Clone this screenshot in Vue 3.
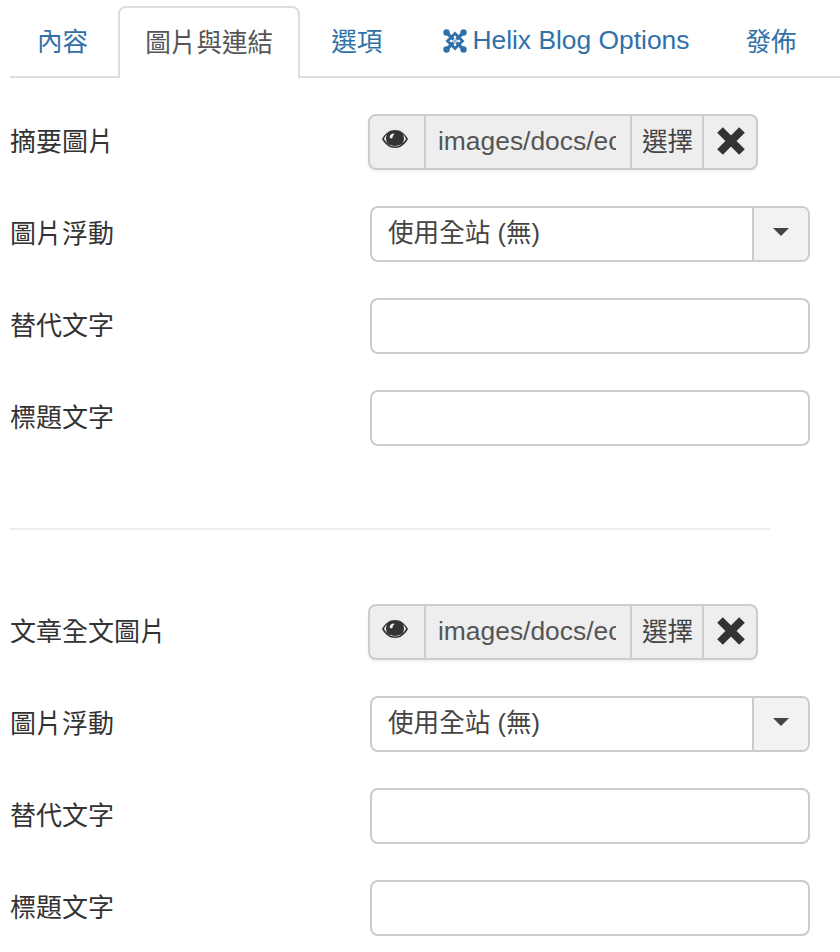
<script setup>
const tabs = [
  { id: 'content', label: '內容' },
  { id: 'images', label: '圖片與連結', active: true },
  { id: 'options', label: '選項' },
  { id: 'helix', label: 'Helix Blog Options', joomla: true },
  { id: 'publish', label: '發佈' },
];

const groups = [
  { image: '摘要圖片' },
  { image: '文章全文圖片' },
];
</script>

<template>
  <div class="page">
    <ul class="tabs">
      <li v-for="tab in tabs" :key="tab.id" class="tab" :class="{ active: tab.active, helix: tab.joomla }">
        <svg v-if="tab.joomla" class="joomla" viewBox="0 0 24 24" width="24" height="24">
          <g fill="#3071a9">
            <circle cx="3.500" cy="3.500" r="3.200" />
            <circle cx="20.500" cy="3.500" r="3.200" />
            <circle cx="3.500" cy="20.500" r="3.200" />
            <circle cx="20.500" cy="20.500" r="3.200" />
          </g>
          <g fill="none" stroke="#3071a9">
            <path stroke-width="3.200" d="M3.500 3.500 L20.500 20.500 M20.500 3.500 L3.500 20.500" />
            <path stroke-width="2.800" d="M12 4.500 L19.500 12 L12 19.500 L4.500 12 Z" />
          </g>
          <path fill="#fff" opacity="0.7" d="M12 8.600 L13.600 10.200 L12 11.800 L10.400 10.200 Z M12 12.200 L13.600 13.800 L12 15.400 L10.400 13.800 Z M8.600 12 L10.200 10.400 L11.800 12 L10.200 13.600 Z M15.400 12 L13.800 10.400 L12.200 12 L13.800 13.600 Z" />
        </svg>
        <span>{{ tab.label }}</span>
      </li>
    </ul>

    <section v-for="(group, i) in groups" :key="i" class="group">
      <div class="row">
        <label>{{ group.image }}</label>
        <div class="media">
          <span class="seg eye">
            <svg viewBox="0 0 26 18" width="26" height="18">
              <path fill="#333" fill-rule="evenodd" d="M13 0C7.500 0 3 3.400 0 9c3 5.600 7.500 9 13 9s10-3.400 13-9c-3-5.600-7.500-9-13-9zM5.200 4.200C3.800 5.200 2.800 6.900 2 9c1.900 3.300 5.900 7 11 7s9.100-3.700 11-7c-.8-2.100-1.800-3.800-3.200-4.800 .7 1.200 1.200 2.800 1.200 4.300 0 4.700-4 8-9 8s-9-3.300-9-8c0-1.500.5-3.100 1.200-4.300zM11 3.500c-1.900.4-3.300 1.800-3.300 3.500 0 .8.700 1.400 1.500 1.400S10.700 7.800 10.700 7c0-1 .5-1.700 1.300-2.200.5-.3.400-1.400-1-1.300z" />
            </svg>
          </span>
          <span class="seg path"><span class="path-text">images/docs/ec</span></span>
          <span class="seg pick">選擇</span>
          <span class="seg clear">
            <svg viewBox="0 0 28 28" width="28" height="28">
              <path d="M3 3 L25 25 M25 3 L3 25" stroke="#333" stroke-width="8" fill="none" />
            </svg>
          </span>
        </div>
      </div>
      <div class="row">
        <label>圖片浮動</label>
        <div class="select">
          <span class="select-value">使用全站 (無)</span>
          <span class="select-arrow"><i></i></span>
        </div>
      </div>
      <div class="row">
        <label>替代文字</label>
        <input class="text" type="text" />
      </div>
      <div class="row">
        <label>標題文字</label>
        <input class="text" type="text" />
      </div>
      <hr v-if="i === 0" />
    </section>
  </div>
</template>

<style>
body { background: #fff; overflow: hidden; }
</style>

<style scoped>
.page {
  height: 952px;
  overflow: hidden;
  padding-top: 6px;
  box-sizing: border-box;
  font-family: "Liberation Sans", "Noto Sans CJK TC", sans-serif;
  font-size: 26px;
  color: #333;
}
.tabs {
  display: flex;
  list-style: none;
  margin: 0 0 0 10px;
  padding: 0;
  height: 70px;
  border-bottom: 2px solid #ddd;
  font-size: 25.6px;
}
.tab {
  display: flex;
  align-items: center;
  height: 66px;
  margin-right: 4px;
  padding: 0 27px;
  box-sizing: border-box;
  color: #3071a9;
  white-space: nowrap;
}
.tab.active {
  height: 72px;
  padding: 0 25px 6px;
  margin-left: -1px;
  background: #fff;
  border: 2px solid #ddd;
  border-bottom: 0;
  border-radius: 8px 8px 0 0;
  color: #555;
}
.helix { font-size: 26.4px; padding-right: 25px; }
.helix span { padding-top: 3px; }
.joomla { margin: 4px 5px 0 3px; }
.group { margin-left: 10px; }
.row {
  display: flex;
  align-items: center;
  height: 56px;
  margin-bottom: 36px;
}
.tabs + .group { padding-top: 36px; }
.row label { width: 360px; flex-shrink: 0; padding-bottom: 6px; }
.media {
  display: flex;
  margin-left: -2px;
  width: 390px;
  height: 56px;
  box-sizing: border-box;
  background: #eee;
  border: 2px solid #ccc;
  border-radius: 8px;
  box-shadow: 0 2px 3px rgba(0, 0, 0, 0.06);
  overflow: hidden;
  font-size: 26.4px;
}
.seg {
  display: flex;
  align-items: center;
  justify-content: center;
  box-sizing: border-box;
  flex-shrink: 0;
  border-right: 2px solid #ccc;
  padding-bottom: 2px;
}
.eye { width: 56px; padding: 0 4px 6px 0; }
.path { width: 206px; padding: 0 0 2px 12px; justify-content: flex-start; color: #555; }
.path-text { display: block; width: 178px; overflow: hidden; white-space: nowrap; }
.pick { width: 72px; font-size: 25.6px; padding: 0 0 6px 1px; color: #444; }
.clear { flex: 1; border-right: 0; padding: 0 0 2px 2px; }
.select {
  display: flex;
  width: 440px;
  height: 56px;
  box-sizing: border-box;
  border: 2px solid #ccc;
  border-radius: 8px;
  overflow: hidden;
  font-size: 25.6px;
}
.select-value { flex: 1; padding-left: 16px; line-height: 50px; color: #444; }
.select-arrow {
  display: flex;
  align-items: center;
  justify-content: center;
  width: 56px;
  flex-shrink: 0;
  background: #f2f2f2;
  border-left: 2px solid #ccc;
  padding-bottom: 4px;
  box-sizing: border-box;
}
.select-arrow i {
  width: 0;
  height: 0;
  border: 8px solid transparent;
  border-top: 8px solid #444;
  border-bottom: 0;
}
.text {
  display: block;
  width: 440px;
  height: 56px;
  box-sizing: border-box;
  border: 2px solid #ccc;
  border-radius: 8px;
  background: #fff;
  margin: 0;
}
hr {
  width: 760px;
  height: 2px;
  margin: 82px 0 74px;
  background: #eee;
  border: 0;
}
</style>
